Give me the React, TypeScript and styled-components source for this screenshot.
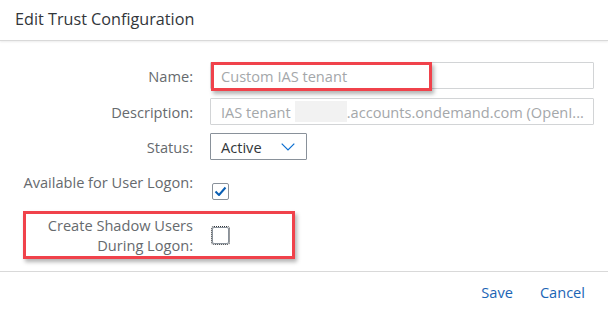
import React from "react";
import styled, { createGlobalStyle } from "styled-components";

const Global = createGlobalStyle`
  html, body { margin: 0; padding: 0; background: #ffffff; }
  body { font-family: "Open Sans", "Noto Sans", "Liberation Sans", sans-serif; }
  * { box-sizing: border-box; }
`;

const Page = styled.div`
  position: relative;
  width: 608px;
  height: 313px;
  display: flex;
  flex-direction: column;
  background: #ffffff;
  overflow: hidden;
`;

const Header = styled.header`
  height: 41px;
  flex: none;
  display: flex;
  align-items: center;
  padding: 0 0 2px 15px;
  border-bottom: 1px solid #d9d9d9;
  box-shadow: 0 1px 2px rgba(0, 0, 0, 0.08);
`;

const Title = styled.h1`
  margin: 0;
  font-size: 16.2px;
  font-weight: 400;
  color: #32363a;
  letter-spacing: 0;
`;

const Form = styled.div`
  flex: 1;
  display: flex;
  flex-direction: column;
  padding-right: 14px;
`;

const Row = styled.div<{ $top: number; $align?: string }>`
  display: grid;
  grid-template-columns: 193px 1fr;
  column-gap: 17px;
  align-items: ${(p) => p.$align ?? "center"};
  margin-top: ${(p) => p.$top}px;
`;

const Label = styled.label<{ $lh?: number }>`
  text-align: right;
  font-size: 14.6px;
  line-height: ${(p) => p.$lh ?? 18}px;
  color: #666a6e;
  letter-spacing: 0;
`;

const Field = styled.div<{ $color?: string }>`
  height: 27px;
  border: 1px solid #d2d4d6;
  border-radius: 1px;
  padding: 0 10px;
  display: flex;
  align-items: center;
  font-size: 14.6px;
  color: ${(p) => p.$color ?? "#a4a7aa"};
  letter-spacing: 0;
  white-space: nowrap;
  overflow: hidden;
`;

const Redacted = styled.span`
  flex: none;
  display: inline-block;
  width: 52px;
  height: 21px;
  margin: 0 0 0 4px;
  background: #f2f2f2;
`;

const Select = styled.div`
  width: 97px;
  height: 27px;
  border: 1px solid #89919a;
  border-radius: 1px;
  padding: 0 11px 0 10px;
  display: flex;
  align-items: center;
  justify-content: space-between;
  font-size: 14.6px;
  color: #32363a;
`;

const Box = styled.div<{ $focus?: boolean; $mt?: number }>`
  width: 17px;
  height: 17px;
  margin-top: ${(p) => p.$mt ?? 0}px;
  margin-left: 2px;
  border: 1px solid #89919a;
  border-radius: 2px;
  display: flex;
  align-items: center;
  justify-content: center;
  outline: ${(p) => (p.$focus ? "1px dotted #32363a" : "none")};
  outline-offset: 0px;
`;

const Footer = styled.footer`
  height: 42px;
  flex: none;
  border-top: 1px solid #d9d9d9;
  display: flex;
  align-items: center;
  justify-content: flex-end;
  gap: 11px;
  padding: 0 15px 2px 0;
`;

const LinkButton = styled.button`
  border: none;
  background: transparent;
  padding: 0 8px;
  font-family: inherit;
  font-size: 14.6px;
  color: #1b65b5;
  cursor: pointer;
`;

const Highlight = styled.div<{ $l: number; $t: number; $w: number; $h: number }>`
  position: absolute;
  left: ${(p) => p.$l}px;
  top: ${(p) => p.$t}px;
  width: ${(p) => p.$w}px;
  height: ${(p) => p.$h}px;
  border: 3px solid #f0424b;
  box-shadow: 2px 3px 4px rgba(0, 0, 0, 0.3);
  pointer-events: none;
`;

const Chevron = () => (
  <svg width="14" height="8" viewBox="0 0 14 8" fill="none">
    <path d="M0.7 0.7 L7 7 L13.3 0.7" stroke="#0a6ed1" strokeWidth="1.2" />
  </svg>
);

const Check = () => (
  <svg width="13" height="11" viewBox="0 0 13 11" fill="none">
    <path d="M1.5 5.5 L5 9 L11.5 1.5" stroke="#0a5fb4" strokeWidth="2" strokeLinejoin="round" />
  </svg>
);

export default function App() {
  return (
    <>
      <Global />
      <Page>
        <Header>
          <Title>Edit Trust Configuration</Title>
        </Header>
        <Form>
          <Row $top={21}>
            <Label>Name:</Label>
            <Field>Custom IAS tenant</Field>
          </Row>
          <Row $top={9}>
            <Label>Description:</Label>
            <Field>
              IAS tenant
              <Redacted />
              .accounts.ondemand.com (OpenI...
            </Field>
          </Row>
          <Row $top={8}>
            <Label>Status:</Label>
            <Select>
              Active
              <Chevron />
            </Select>
          </Row>
          <Row $top={13} $align="start">
            <Label>Available for User Logon:</Label>
            <Box $mt={10}>
              <Check />
            </Box>
          </Row>
          <Row $top={15}>
            <Label $lh={20}>
              Create Shadow Users
              <br />
              During Logon:
            </Label>
            <Box $focus />
          </Row>
        </Form>
        <Footer>
          <LinkButton>Save</LinkButton>
          <LinkButton>Cancel</LinkButton>
        </Footer>
        <Highlight $l={211} $t={62} $w={221} $h={29} />
        <Highlight $l={23} $t={211} $w={272} $h={48} />
      </Page>
    </>
  );
}
